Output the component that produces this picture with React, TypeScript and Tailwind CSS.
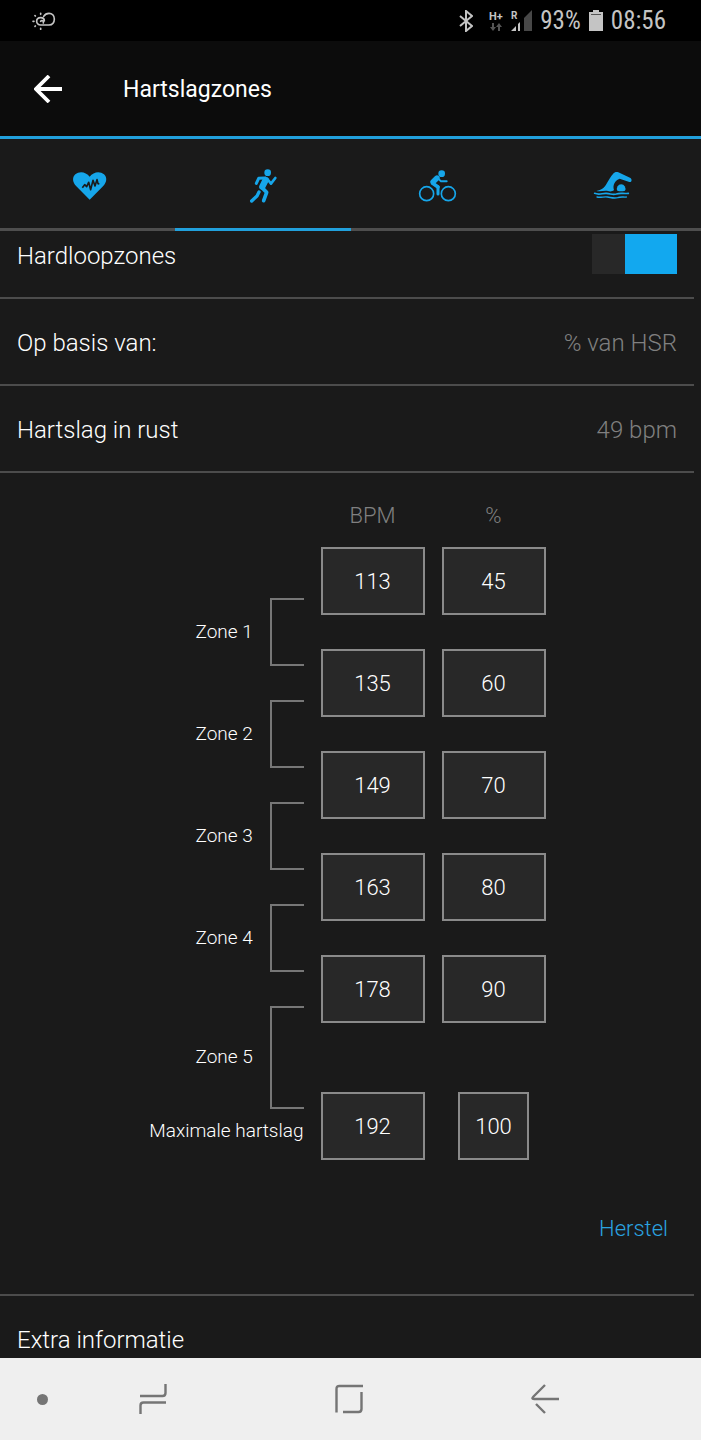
import { useState } from 'react';

type Zone = {
  label: string;
  bpm: string;
  percent: string;
};

const zones: Zone[] = [
  { label: 'Zone 1', bpm: '113', percent: '45' },
  { label: 'Zone 2', bpm: '135', percent: '60' },
  { label: 'Zone 3', bpm: '149', percent: '70' },
  { label: 'Zone 4', bpm: '163', percent: '80' },
  { label: 'Zone 5', bpm: '178', percent: '90' },
];

const boxClass =
  'h-[68px] border-2 border-[#8a8a8a] bg-[#282828] text-center text-[22px] font-light text-white outline-none';

function HeartIcon() {
  return (
    <svg viewBox="0 0 120 120" className="size-10" fill="none" aria-hidden="true">
      <path
        d="M65 107 25 67C13 55 12 40 22 31C34 20 54 23 65 38C76 23 96 20 108 31C118 40 117 55 105 67Z"
        fill="#16a6ea"
      />
      <path
        d="M43 71 50 62 56 68 62 55 68 77 75 49 81 66 87 47 90 59 94 60"
        stroke="#1a1a1a"
        strokeWidth="5"
        strokeLinejoin="round"
      />
    </svg>
  );
}

function RunIcon() {
  return (
    <svg viewBox="0 0 120 120" className="size-10" fill="none" stroke="#16a6ea" strokeLinecap="round" strokeLinejoin="round" aria-hidden="true">
      <circle cx="74" cy="26" r="10" fill="#16a6ea" stroke="none" />
      <path d="M40 58 47 43 66 42" strokeWidth="9" />
      <path d="M73 45 84 59 97 42" strokeWidth="8" />
      <path d="M68 48 58 68" strokeWidth="19" />
      <path d="M57 71 71 85 62 110" strokeWidth="11" />
      <path d="M48 84 42 96 26 111" strokeWidth="10" />
    </svg>
  );
}

function BikeIcon() {
  return (
    <svg viewBox="0 0 120 120" className="size-10" fill="none" stroke="#16a6ea" strokeLinecap="round" strokeLinejoin="round" aria-hidden="true">
      <circle cx="26" cy="89" r="21" strokeWidth="5" />
      <circle cx="91" cy="89" r="21" strokeWidth="5" />
      <circle cx="71" cy="29" r="10" fill="#16a6ea" stroke="none" />
      <path d="M57 42 45 54" strokeWidth="16" />
      <path d="M44 58 60 69" strokeWidth="11" />
      <path d="M60 68V90" strokeWidth="9" />
      <path d="M60 43 69 52H86" strokeWidth="6" />
    </svg>
  );
}

function SwimIcon() {
  return (
    <svg viewBox="0 0 120 120" className="size-10" fill="#16a6ea" aria-hidden="true">
      <path d="M10 81C26 78 34 72 42 57C48 47 54 36 60 30C65 24 70 23 76 25L111 41C119 45 116 56 109 54L80 44C66 49 58 63 63 78C58 83 50 83 45 81C35 79 24 83 10 81Z" />
      <path d="M73 80A13 13 0 1 1 96 80Q84 84 73 80Z" />
      <g fill="none" stroke="#16a6ea" strokeWidth="5" strokeLinecap="round">
        <path d="M5 88C20 94 28 87 40 88C54 89 58 93 70 90C82 86 92 90 106 88" />
        <path d="M12 99C24 102 32 97 44 99C56 101 62 104 74 101C84 97 92 100 100 99" strokeWidth="4" />
      </g>
    </svg>
  );
}

const tabs = [
  { name: 'Algemeen', Icon: HeartIcon },
  { name: 'Hardlopen', Icon: RunIcon },
  { name: 'Fietsen', Icon: BikeIcon },
  { name: 'Zwemmen', Icon: SwimIcon },
];

function StatusBar() {
  return (
    <div className="flex h-[41px] items-center justify-between bg-black pr-[35px] pl-8 text-[#c4c4c4]">
      <svg viewBox="0 0 72 54" className="h-[18px] w-6" fill="none" stroke="currentColor" strokeWidth="5" strokeLinecap="round" aria-hidden="true">
        <path d="M26 28C29 23 36 27 34 33M37 27C37 20 31 17 26 17C18 17 14 22 14 28C14 34 19 39 26 39H51C62 39 67 30 67 21C67 11 60 4 51 4C44 4 38 8 35 13" />
        <path d="M26 4v3M9 11l1 1M3 28h3M9 43l1-1M26 49v3" />
      </svg>
      <div className="flex items-center">
        <svg viewBox="0 0 14 22" className="mr-[15px] h-[22px] w-[14px]" fill="none" stroke="currentColor" strokeWidth="2" aria-hidden="true">
          <path d="M1 6l12 10-6 5V1l6 5L1 16" />
        </svg>
        <div className="flex w-[15px] flex-col items-center">
          <span className="text-[11px] leading-[12px] font-bold">H+</span>
          <svg viewBox="0 0 12 8" className="h-2 w-3" fill="#555" aria-hidden="true">
            <path d="M2 0h2v4h2L3 8 0 4h2zM8 8h2V4h2L9 0 6 4h2z" />
          </svg>
        </div>
        <svg viewBox="0 0 21 21" className="mr-2 ml-2 h-[21px] w-[21px]" aria-hidden="true">
          <text x="0" y="9" fill="#c4c4c4" className="font-['Roboto'] text-[10px] font-bold">R</text>
          <path d="M13 8 21 0V21H13Z" fill="#484848" />
          <path d="M0 21 5 16V21ZM7 14 9 12V21H7Z" fill="#c4c4c4" />
        </svg>
        <span className="font-['Roboto_Condensed','Roboto',sans-serif] text-[25px] leading-8">93%</span>
        <svg viewBox="0 0 14 21" className="mx-2 h-[21px] w-[14px]" fill="currentColor" aria-hidden="true">
          <path d="M4 0h6v2h4v19H0V2h4z" />
          <path d="M2 4h10v1H2z" fill="#555" />
        </svg>
        <span className="font-['Roboto_Condensed','Roboto',sans-serif] text-[25px] leading-8">08:56</span>
      </div>
    </div>
  );
}

function ZoneTable() {
  return (
    <div className="flex justify-center gap-[17px]">
      <div className="flex w-[155px] flex-col pt-[125px]">
        <div className="flex flex-col gap-[34px]">
          {zones.map((zone, index) => (
            <div
              key={zone.label}
              className={`flex items-center justify-end gap-4 ${index === 4 ? 'h-[103px]' : 'h-[68px]'}`}
            >
              <span className="w-[58px] text-[19px] font-light whitespace-nowrap">{zone.label}</span>
              <span className="h-full w-[34px] border-2 border-r-0 border-[#777]" />
            </div>
          ))}
        </div>
        <label htmlFor="max-bpm" className="mt-[10px] text-right text-[19px] leading-6 font-light whitespace-nowrap">
          Maximale hartslag
        </label>
      </div>
      <div className="flex w-[104px] flex-col pt-[30px]">
        <span className="mb-[18px] text-center text-[22px] leading-[26px] font-light text-[#808080]">BPM</span>
        <div className="flex flex-col gap-[34px]">
          {zones.map((zone) => (
            <input key={zone.label} aria-label={`${zone.label} BPM`} defaultValue={zone.bpm} className={boxClass} />
          ))}
        </div>
        <input id="max-bpm" defaultValue="192" className={`mt-[69px] ${boxClass}`} />
      </div>
      <div className="flex w-[104px] flex-col pt-[30px]">
        <span className="mb-[18px] text-center text-[22px] leading-[26px] font-light text-[#808080]">%</span>
        <div className="flex flex-col gap-[34px]">
          {zones.map((zone) => (
            <input key={zone.label} aria-label={`${zone.label} %`} defaultValue={zone.percent} className={boxClass} />
          ))}
        </div>
        <input
          aria-label="Maximale hartslag %"
          defaultValue="100"
          className={`mx-auto mt-[69px] w-[71px] ${boxClass}`}
        />
      </div>
    </div>
  );
}

export default function App() {
  const [activeTab, setActiveTab] = useState(1);
  const [enabled, setEnabled] = useState(true);

  return (
    <div className="flex min-h-screen flex-col bg-[#1a1a1a] font-['Roboto',sans-serif] text-white">
      <StatusBar />
      <header className="flex h-[98px] items-center border-b-[3px] border-[#21a0dc] bg-[#0c0c0c] pl-[34px]">
        <button type="button" aria-label="Terug">
          <svg viewBox="0 0 28 28" className="size-7" fill="none" stroke="#fff" strokeWidth="3.8" aria-hidden="true">
            <path d="M28 14H3M15 1 2 14 15 27" />
          </svg>
        </button>
        <h1 className="ml-[61px] pt-[2px] text-[23px] leading-7">Hartslagzones</h1>
      </header>

      <nav className="grid h-[92px] grid-cols-4">
        {tabs.map(({ name, Icon }, index) => (
          <button
            key={name}
            type="button"
            aria-label={name}
            onClick={() => setActiveTab(index)}
            className={`flex items-center justify-center border-b-[3px] ${
              index === activeTab ? 'border-[#21a0dc]' : 'border-[#4e4e4e]'
            }`}
          >
            <Icon />
          </button>
        ))}
      </nav>

      <main className="mr-[7px] flex-1">
        <div className="flex h-[68px] items-start justify-between border-b-2 border-[#4c4c4c] px-[17px] pt-[3px]">
          <label htmlFor="run-zones" className="text-2xl leading-[44px] font-light">
            Hardloopzones
          </label>
          <input
            id="run-zones"
            type="checkbox"
            role="switch"
            checked={enabled}
            onChange={(event) => setEnabled(event.target.checked)}
            className="h-10 w-[85px] appearance-none border-l-[33px] border-[#282828] bg-[#444] checked:bg-[#12a8ef]"
          />
        </div>
        <div className="flex h-[87px] items-center justify-between border-b-2 border-[#4c4c4c] px-[17px] pt-[2px] text-2xl font-light">
          <span>Op basis van:</span>
          <span className="text-[#808080]">% van HSR</span>
        </div>
        <div className="flex h-[87px] items-center justify-between border-b-2 border-[#4c4c4c] px-[17px] pt-[2px] text-2xl font-light">
          <span>Hartslag in rust</span>
          <span className="text-[#808080]">49 bpm</span>
        </div>

        <section className="border-b-2 border-[#4c4c4c] pb-[51px]">
          <ZoneTable />
          <div className="flex justify-end pt-[55px] pr-[26px]">
            <button type="button" className="text-[22px] leading-7 font-light text-[#2aa3e0]">
              Herstel
            </button>
          </div>
        </section>

        <h2 className="px-[17px] pt-[30px] pb-1 text-2xl leading-7 font-light">Extra informatie</h2>
      </main>

      <footer className="flex h-[82px] items-center bg-[#efefef] pl-[37px]">
        <button type="button" aria-label="Navigatiebalk verbergen" className="size-[11px] rounded-full bg-[#757575]" />
        <button type="button" aria-label="Recente apps" className="ml-[91px]">
          <svg viewBox="0 0 28 32" className="h-8 w-7" fill="none" stroke="#757575" strokeWidth="2.4" aria-hidden="true">
            <path d="M26.5 1V10Q26.5 13 23.5 13H1M1.5 31V22.5Q1.5 19.5 4.5 19.5H27" />
          </svg>
        </button>
        <button type="button" aria-label="Startscherm" className="ml-[168px]">
          <svg viewBox="0 0 28 30" className="h-[30px] w-7" fill="none" stroke="#757575" strokeWidth="2.4" aria-hidden="true">
            <path d="M1.500 28.5V5Q1.5 2 4.5 2H28M26.5 8V25Q26.5 28 23.5 28H8" />
          </svg>
        </button>
        <button type="button" aria-label="Vorige" className="ml-[168px]">
          <svg viewBox="0 0 28 30" className="h-[30px] w-7" fill="none" stroke="#757575" strokeWidth="2.4" aria-hidden="true">
            <path d="M28 15H3Q0 15 2.5 12.5L14 1M5 20 14 29" />
          </svg>
        </button>
      </footer>
    </div>
  );
}
